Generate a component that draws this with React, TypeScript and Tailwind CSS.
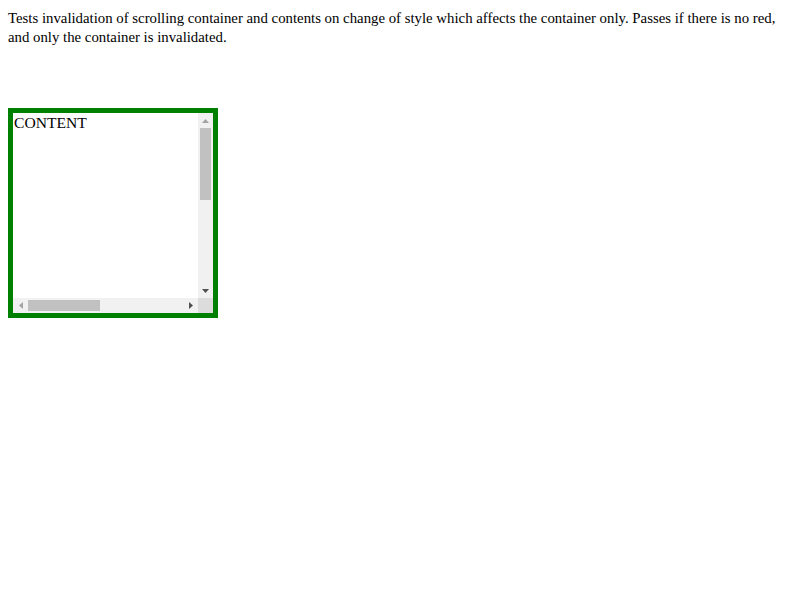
function Arrow({ dir, color }: { dir: "up" | "down" | "left" | "right"; color: string }) {
    const points = {
        up: "0,4 7,4 3.5,0",
        down: "0,0 7,0 3.5,4",
        left: "4,0 4,7 0,3.5",
        right: "0,0 0,7 4,3.5",
    }[dir];
    const vertical = dir === "up" || dir === "down";
    return (
        <svg width={vertical ? 7 : 4} height={vertical ? 4 : 7} viewBox={vertical ? "0 0 7 4" : "0 0 4 7"}>
            <polygon points={points} fill={color} />
        </svg>
    );
}

export default function App() {
    return (
        <div className="m-2 font-['Liberation_Serif',serif] text-black">
            <p className="text-[14.8px] leading-[19px] pt-[1px]">
                Tests invalidation of scrolling container and contents on change of style which affects the
                container only. Passes if there is no red, and only the container is invalidated.
            </p>
            {/* Scrolling container, scrollbars drawn by hand */}
            <div className="mt-[61px] flex h-[210px] w-[210px] flex-col border-[5px] border-[#008000] bg-white">
                <div className="flex flex-1">
                    <div className="flex-1 overflow-hidden pl-[1px] pt-[1px] text-[15.6px] leading-[18px]">CONTENT</div>
                    <div className="flex w-[15px] flex-col bg-[#f1f1f1]">
                        <div className="flex h-[15px] items-center justify-center">
                            <Arrow dir="up" color="#a3a3a3" />
                        </div>
                        <div className="flex-1 px-[2px]">
                            <div className="h-[72px] bg-[#c1c1c1]" />
                        </div>
                        <div className="flex h-[15px] items-center justify-center">
                            <Arrow dir="down" color="#505050" />
                        </div>
                    </div>
                </div>
                <div className="flex h-[15px]">
                    <div className="flex flex-1 bg-[#f1f1f1]">
                        <div className="flex w-[15px] items-center justify-center">
                            <Arrow dir="left" color="#a3a3a3" />
                        </div>
                        <div className="flex flex-1 py-[2px]">
                            <div className="w-[72px] bg-[#c1c1c1]" />
                        </div>
                        <div className="flex w-[15px] items-center justify-center">
                            <Arrow dir="right" color="#505050" />
                        </div>
                    </div>
                    <div className="w-[15px] bg-[#dcdcdc]" />
                </div>
            </div>
        </div>
    );
}
